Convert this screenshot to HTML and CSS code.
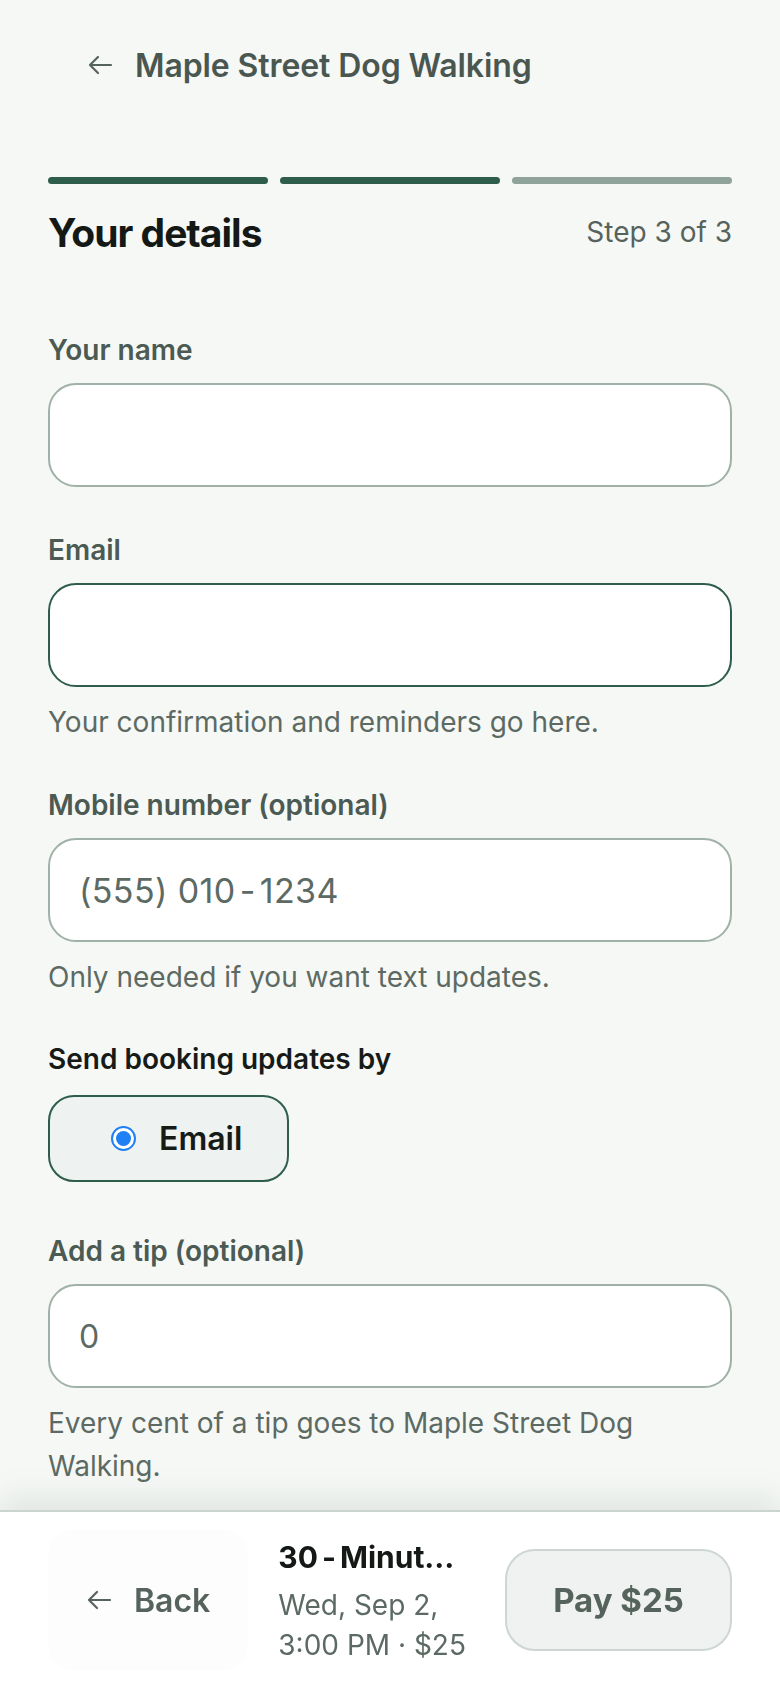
FILE: index.html
```html
<!DOCTYPE html>
<html lang="en">
<head>
<meta charset="utf-8">
<title>Your details</title>
<link rel="stylesheet" href="styles.css">
</head>
<body>
<div class="page">
  <header class="topbar">
    <svg class="arrow" width="26" height="22" viewBox="0 0 26 22" aria-hidden="true"><path d="M24 11H3M11 3L3 11l8 8" fill="none" stroke="#56635c" stroke-width="2.2" stroke-linecap="round" stroke-linejoin="round"/></svg>
    <h1 class="biz">Maple Street Dog Walking</h1>
  </header>

  <div class="progress">
    <span class="seg done"></span>
    <span class="seg done"></span>
    <span class="seg todo"></span>
  </div>

  <div class="heading-row">
    <h2 class="heading">Your details</h2>
    <span class="step">Step 3 of 3</span>
  </div>

  <form class="form">
    <div class="field f-name">
      <label class="label">Your name</label>
      <div class="input"></div>
    </div>

    <div class="field f-email">
      <label class="label">Email</label>
      <div class="input focused"></div>
      <p class="help">Your confirmation and reminders go here.</p>
    </div>

    <div class="field f-mobile">
      <label class="label">Mobile number (optional)</label>
      <div class="input"><span class="placeholder">(555) 010<span class="hy">-</span>1234</span></div>
      <p class="help">Only needed if you want text updates.</p>
    </div>

    <div class="field f-send">
      <p class="label strong">Send booking updates by</p>
      <div class="pill"><span class="radio"><span class="dot"></span></span><span class="pill-text">Email</span></div>
    </div>

    <div class="field f-tip">
      <label class="label">Add a tip (optional)</label>
      <div class="input"><span class="value">0</span></div>
      <p class="help">Every cent of a tip goes to Maple Street Dog Walking.</p>
    </div>
  </form>
</div>

<footer class="bottombar">
  <div class="bar-inner">
    <div class="back">
      <svg class="arrow" width="26" height="22" viewBox="0 0 26 22" aria-hidden="true"><path d="M24 11H3M11 3L3 11l8 8" fill="none" stroke="#56635c" stroke-width="2.2" stroke-linecap="round" stroke-linejoin="round"/></svg>
      <span class="back-text">Back</span>
    </div>
    <div class="summary">
      <div class="sum-title">30<span class="hy">-</span>Minute Walk</div>
      <div class="sum-sub">Wed, Sep 2, 3:00&nbsp;PM · $25</div>
    </div>
    <div class="pay">Pay $25</div>
  </div>
</footer>
</body>
</html>
```

FILE: styles.css
```css
* { box-sizing: border-box; }
html, body { margin: 0; padding: 0; }
body {
  background: #f6f8f6;
  font-family: Inter, "Noto Sans", "DejaVu Sans", sans-serif;
  color: #161b18;
  width: 780px;
  min-height: 1688px;
}
.page { padding: 0 48px 200px; }

.topbar {
  display: flex;
  align-items: center;
  gap: 22px;
  height: 54px;
  margin-top: 38px;
  padding-left: 39px;
}
.biz {
  margin: 0;
  font-size: 32px;
  font-weight: 600;
  color: #4a5751;
  letter-spacing: -0.1px;
}
.arrow { flex: none; display: block; }

.progress {
  display: flex;
  gap: 12px;
  height: 7px;
  margin-top: 85px;
}
.seg { flex: 1; border-radius: 4px; }
.seg.done { background: #2e5d4c; }
.seg.todo { background: #8fa39a; }

.heading-row {
  display: flex;
  justify-content: space-between;
  align-items: center;
  height: 44px;
  margin-top: 26px;
}
.heading {
  margin: 0;
  font-size: 39px;
  font-weight: 700;
  letter-spacing: -1px;
  color: #141916;
}
.step {
  font-size: 28px;
  color: #56635c;
}

.form { margin-top: 79px; }
.label {
  display: block;
  margin: 0 0 16px;
  font-size: 28px;
  line-height: 34px;
  font-weight: 600;
  color: #4b5a52;
}
.label.strong { color: #161b18; margin-bottom: 19px; }
.input {
  height: 104px;
  background: #fff;
  border: 2px solid #a0b1a8;
  border-radius: 28px;
  display: flex;
  align-items: center;
  padding: 0 29px;
  font-size: 32px;
  color: #5c6a63;
}
.input.focused { border-color: #2e5d4c; }
.placeholder { font-size: 34px; letter-spacing: 0.4px; }
.hy { margin: 0 4px; }
.help {
  margin: 14px 0 0;
  font-size: 28px;
  line-height: 43px;
  color: #5c6a63;
}
.field + .field { margin-top: 44px; }
.f-email { margin-top: 46px !important; }
.f-send { margin-top: 43px !important; }
.f-tip { margin-top: 52px !important; }

.pill {
  display: inline-flex;
  align-items: center;
  gap: 23px;
  height: 87px;
  width: 241px;
  padding-left: 61px;
  background: #eef2f0;
  border: 2px solid #2e5d4c;
  border-radius: 26px;
}
.radio {
  width: 25px;
  height: 25px;
  border-radius: 50%;
  border: 2.5px solid #1f7ff5;
  background: #fff;
  display: flex;
  align-items: center;
  justify-content: center;
}
.dot { width: 15px; height: 15px; border-radius: 50%; background: #1f7ff5; }
.pill-text { font-size: 32px; font-weight: 600; color: #161b18; }

.bottombar {
  position: fixed;
  left: 0;
  right: 0;
  bottom: 0;
  height: 178px;
  background: #fff;
  border-top: 2px solid #cbd5d0;
  box-shadow: 0 -14px 28px rgba(90, 120, 105, 0.13);
}
.bar-inner {
  display: flex;
  align-items: center;
  height: 100%;
  padding: 0 48px;
}
.back {
  display: flex;
  align-items: center;
  gap: 22px;
  padding: 0 38px;
  height: 140px;
  border-radius: 24px;
  background: rgba(246, 248, 246, 0.35);
}
.back-text { font-size: 32px; font-weight: 600; color: #56635c; }
.summary {
  width: 190px;
  margin-left: 30px;
}
.sum-title {
  font-size: 30px;
  font-weight: 700;
  line-height: 44px;
  color: #141916;
  white-space: nowrap;
  overflow: hidden;
  text-overflow: ellipsis;
}
.sum-sub {
  margin-top: 6px;
  font-size: 28px;
  line-height: 40px;
  color: #5c6a63;
}
.pay {
  flex: none;
  margin-left: auto;
  width: 227px;
  height: 102px;
  display: flex;
  align-items: center;
  justify-content: center;
  background: #eff2f0;
  border: 2px solid #cdd6d1;
  border-radius: 30px;
  font-size: 33px;
  font-weight: 700;
  color: #56635c;
}
```
